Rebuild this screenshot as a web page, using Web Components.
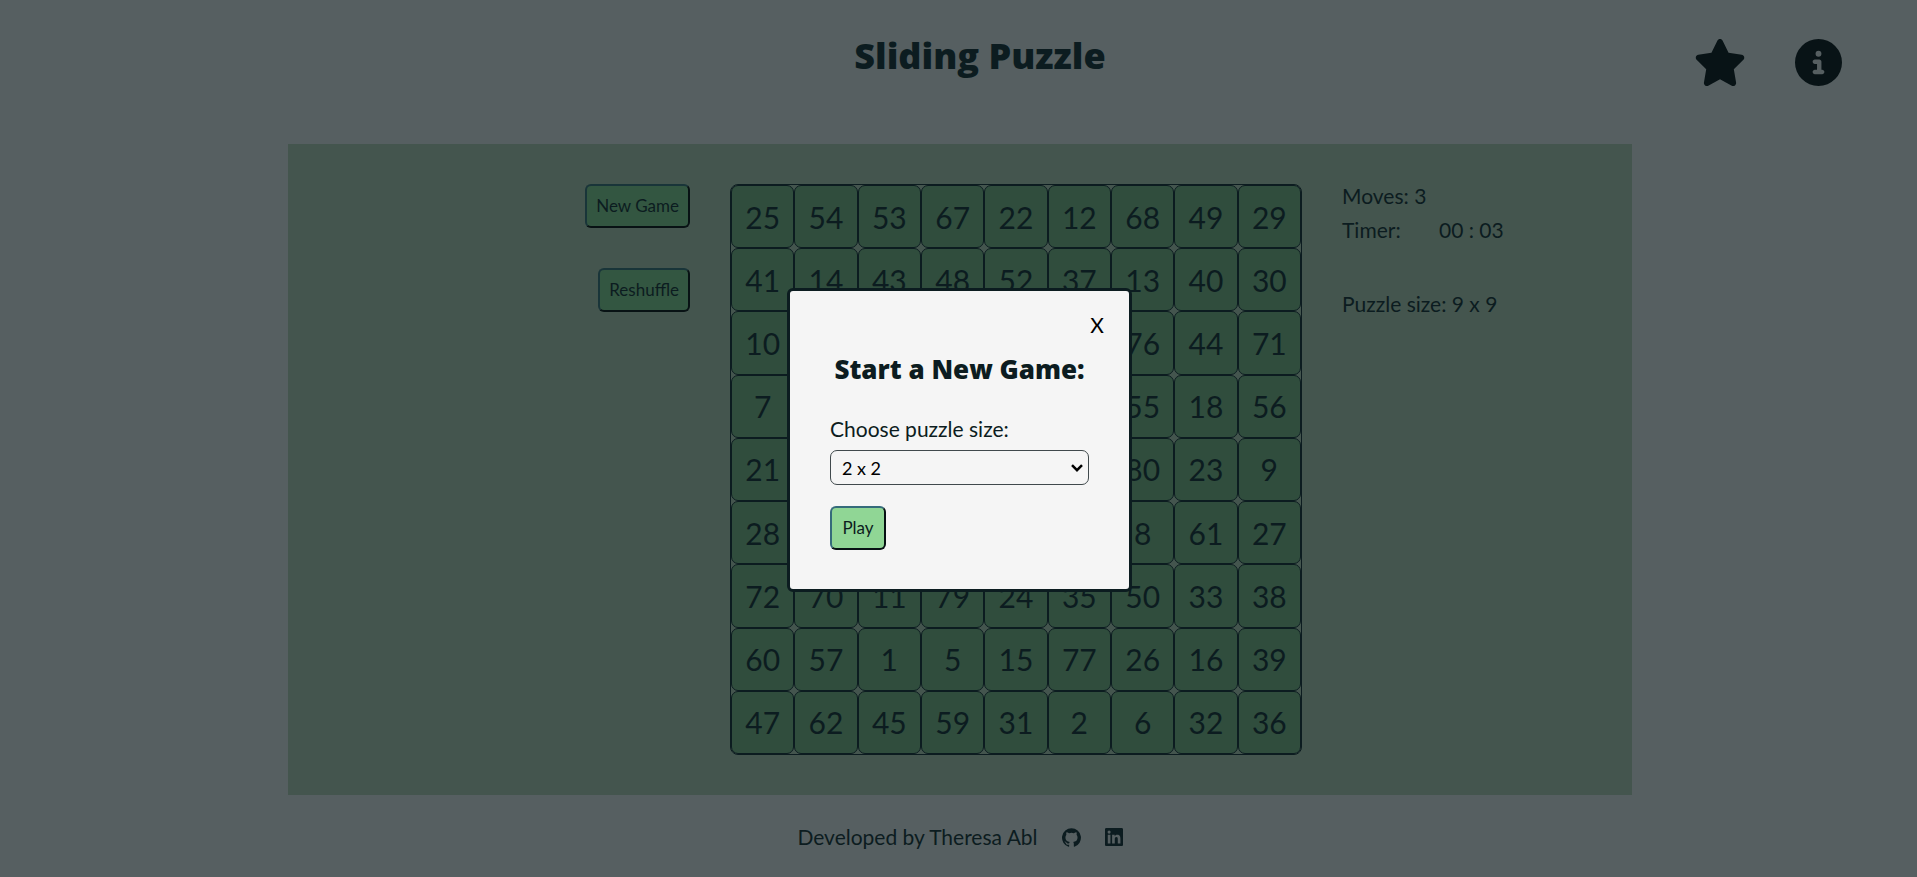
<!DOCTYPE html>
<html lang="en">
<head>
<meta charset="utf-8">
<title>Sliding Puzzle</title>
<style>
  :root {
    --ink: #0c1c20;
    --page: #565f61;
    --panel: #44554e;
    --tile: #304d3d;
    --button: #335641;
  }
  body {
    margin: 0;
    background: var(--page);
    color: var(--ink);
    font: 21px/24px Lato, "Open Sans", sans-serif;
  }
</style>
</head>
<body>
<puzzle-app></puzzle-app>
<script>
function define(name, html, setup) {
  const template = document.createElement('template');
  template.innerHTML = html;
  customElements.define(name, class extends HTMLElement {
    connectedCallback() {
      if (this.shadowRoot) return;
      this.attachShadow({ mode: 'open' }).append(template.content.cloneNode(true));
      if (setup) setup(this, this.shadowRoot);
    }
  });
}

const icons = {
  star: ['0 0 576 512', 'M316.9 18C311.6 7 300.4 0 288.1 0s-23.4 7-28.8 18L195 150.3 51.4 171.5c-12 1.8-22 10.2-25.7 21.7s-.7 24.2 7.9 32.7L137.8 329 113.2 474.7c-2 12 3 24.2 12.900 31.300s23 8 33.800 2.300l128.300-68.500 128.300 68.500c10.800 5.700 23.900 4.900 33.800-2.300s14.900-19.300 12.900-31.300L438.500 329 542.700 225.900c8.600-8.500 11.700-21.200 7.900-32.700s-13.700-19.900-25.700-21.700L381.200 150.300 316.900 18z'],
  info: ['0 0 512 512', 'M256 512A256 256 0 1 0 256 0a256 256 0 1 0 0 512zM216 336h24V272H216c-13.300 0-24-10.700-24-24s10.700-24 24-24h48c13.300 0 24 10.700 24 24v88h8c13.300 0 24 10.700 24 24s-10.700 24-24 24H216c-13.300 0-24-10.700-24-24s10.700-24 24-24zm40-208a32 32 0 1 1 0 64 32 32 0 1 1 0-64z'],
  github: ['0 0 24 24', 'M12 .3a12 12 0 0 0-3.800 23.380c.6.12.83-.26.83-.57L9 21.070c-3.340.72-4.040-1.610-4.040-1.610-.55-1.390-1.340-1.760-1.340-1.760-1.080-.74.09-.73.09-.73 1.200.090 1.830 1.240 1.830 1.240 1.080 1.830 2.810 1.300 3.500 1 .1-.78.42-1.310.76-1.610-2.670-.3-5.470-1.330-5.470-5.930 0-1.310.47-2.380 1.240-3.220-.14-.3-.54-1.520.1-3.180 0 0 1-.32 3.300 1.230a11.500 11.500 0 0 1 6 0c2.280-1.550 3.290-1.230 3.290-1.230.64 1.660.24 2.880.12 3.180a4.650 4.650 0 0 1 1.230 3.220c0 4.610-2.800 5.630-5.480 5.920.42.36.81 1.100.81 2.220l-.01 3.290c0 .31.2.69.82.57A12 12 0 0 0 12 .3'],
  linkedin: ['0 0 448 448', 'M416 0H31.900C14.300 0 0 14.500 0 32.300v383.400C0 433.500 14.300 448 31.900 448H416c17.600 0 32-14.500 32-32.300V32.300C448 14.500 433.600 0 416 0zM135.400 384H69V170.200h66.500V384zM102.200 141a38.500 38.500 0 1 1 0-77 38.500 38.500 0 0 1 0 77zM384.300 384h-66.400V280c0-24.800-.5-56.700-34.500-56.700-34.600 0-39.900 27-39.900 54.900V384h-66.400V170.200h63.700v29.200h.9c8.900-16.800 30.600-34.500 62.900-34.500 67.200 0 79.700 44.300 79.700 101.900V384z']
};

define('app-icon', `
  <style>
    :host { display: block; }
    svg { display: block; width: 100%; height: 100%; fill: currentColor; }
  </style>
  <svg aria-hidden="true"><path fill-rule="evenodd"/></svg>`,
  (host, root) => {
    const [box, path] = icons[host.getAttribute('name')];
    root.querySelector('svg').setAttribute('viewBox', box);
    root.querySelector('path').setAttribute('d', path);
  });

define('app-header', `
  <style>
    :host { display: grid; grid-template-columns: 1fr auto 1fr; height: 144px; box-sizing: border-box; padding: 32px 75px 0 118px; }
    h1 { grid-column: 2; margin: 0; font: 800 36px/48px "Open Sans", sans-serif; }
    nav { display: flex; justify-content: flex-end; gap: 48px; padding-top: 6px; }
    button { border: 0; padding: 0; background: none; color: #081316; height: 48px; }
    app-icon { height: 47px; width: 47px; }
    .wide { width: 54px; }
  </style>
  <h1><slot></slot></h1>
  <nav>
    <button aria-label="High scores"><app-icon class="wide" name="star"></app-icon></button>
    <button aria-label="Information"><app-icon name="info"></app-icon></button>
  </nav>`);

define('game-button', `
  <style>
    :host { display: block; }
    button {
      display: block; height: 44px; min-width: 56px; padding: 0 9px; color: var(--ink);
      font: 17px/20px Lato, "Open Sans", sans-serif;
      background: var(--fill, var(--button)); border: 2px solid;
      border-color: var(--light, #193539) #081214 #081214 var(--light, #193539);
      border-radius: 6px;
    }
  </style>
  <button><slot></slot></button>`);

define('puzzle-board', `
  <style>
    :host {
      display: grid; grid-template: repeat(9, 1fr) / repeat(9, 1fr);
      box-sizing: border-box; aspect-ratio: 572 / 571;
      border: 1px solid var(--ink); border-radius: 8px;
    }
    div {
      display: flex; align-items: center; justify-content: center;
      border: 1px solid var(--ink); border-radius: 7px;
      background: var(--tile); font-size: 30px; line-height: 36px;
    }
  </style>`,
  (host, root) => {
    // Tiles that the open dialog covers completely are left blank.
    const rows = [
      [25, 54, 53, 67, 22, 12, 68, 49, 29],
      [41, 14, 43, 48, 52, 37, 13, 40, 30],
      [10, '', '', '', '', '', 76, 44, 71],
      [7, '', '', '', '', '', 55, 18, 56],
      [21, '', '', '', '', '', 80, 23, 9],
      [28, '', '', '', '', '', 8, 61, 27],
      [72, 70, 11, 79, 24, 35, 50, 33, 38],
      [60, 57, 1, 5, 15, 77, 26, 16, 39],
      [47, 62, 45, 59, 31, 2, 6, 32, 36]];
    for (const value of rows.flat()) {
      const tile = document.createElement('div');
      tile.textContent = value;
      root.append(tile);
    }
  });

define('game-stats', `
  <style>
    :host { display: flex; flex-direction: column; gap: 10px; }
    p { margin: 0; }
    .timer { display: grid; grid-template-columns: 97px auto; justify-content: start; }
    .size { margin-top: 40px; }
  </style>
  <p>Moves: 3</p>
  <p class="timer"><span>Timer:</span><span>00 : 03</span></p>
  <p class="size">Puzzle size: 9 x 9</p>`);

define('game-panel', `
  <style>
    :host {
      display: grid; grid-template-columns: 402fr 572px 290fr; gap: 40px; align-items: start;
      margin: 0 285px 0 288px; padding: 40px 0; background: var(--panel);
    }
    .actions { display: flex; flex-direction: column; align-items: flex-end; gap: 40px; }
  </style>
  <div class="actions">
    <game-button>New Game</game-button>
    <game-button>Reshuffle</game-button>
  </div>
  <puzzle-board></puzzle-board>
  <game-stats></game-stats>`);

define('app-footer', `
  <style>
    :host { display: flex; justify-content: center; align-items: center; height: 82px; box-sizing: border-box; padding: 2px 0 0 3px; }
    a { color: inherit; margin-left: 24px; }
    app-icon { width: 19px; height: 19px; }
    .small { width: 18px; height: 18px; }
  </style>
  <span>Developed by Theresa Abl</span>
  <a href="#github" aria-label="GitHub"><app-icon name="github"></app-icon></a>
  <a href="#linkedin" aria-label="LinkedIn"><app-icon class="small" name="linkedin"></app-icon></a>`);

define('new-game-dialog', `
  <style>
    :host {
      position: fixed; inset: 0; display: flex; align-items: center; justify-content: center;
      padding: 3px 0 0 2px;
    }
    dialog {
      position: static; margin: 0; box-sizing: border-box; width: 345px; height: 304px;
      padding: 22px 40px 0; border: 3px solid var(--ink); border-radius: 6px;
      background: #f5f5f5; color: var(--ink);
      display: flex; flex-direction: column; align-items: flex-start;
    }
    .close {
      align-self: flex-end; margin-right: -20px; width: 24px; height: 24px; padding: 0;
      border: 0; background: none; color: #000; font: 21px/24px Lato, sans-serif;
    }
    h2 { align-self: center; margin: 14px 0 30px; font: 800 26px/36px "Open Sans", sans-serif; white-space: nowrap; }
    .field { display: grid; align-self: stretch; align-items: center; height: 35px; margin: 9px 0 21px; }
    .field > * { grid-area: 1 / 1; }
    select {
      appearance: none; width: 100%; height: 100%; margin: 0; padding: 0 11px;
      border: 1px solid #40494c; border-radius: 7px; background: #f5f5f5; color: #000;
      font: 18px/24px Lato, sans-serif;
    }
    .field svg { justify-self: end; width: 12px; height: 8px; margin-right: 6px; pointer-events: none; fill: none; stroke: #000; stroke-width: 2.5; }
    game-button { --fill: #90d695; --light: #356b7b; }
  </style>
  <dialog open aria-labelledby="title">
    <button class="close" aria-label="Close">X</button>
    <h2 id="title">Start a New Game:</h2>
    <label for="size">Choose puzzle size:</label>
    <div class="field">
      <select id="size">
        <option>2 x 2</option><option>3 x 3</option><option>4 x 4</option><option>5 x 5</option>
        <option>6 x 6</option><option>7 x 7</option><option>8 x 8</option><option>9 x 9</option>
      </select>
      <svg viewBox="0 0 12 8" aria-hidden="true"><path d="M1 1.200 6 6.200 11 1.200"/></svg>
    </div>
    <game-button>Play</game-button>
  </dialog>`);

define('puzzle-app', `
  <style>:host { display: block; }</style>
  <app-header>Sliding Puzzle</app-header>
  <game-panel></game-panel>
  <app-footer></app-footer>
  <new-game-dialog></new-game-dialog>`);
</script>
</body>
</html>
